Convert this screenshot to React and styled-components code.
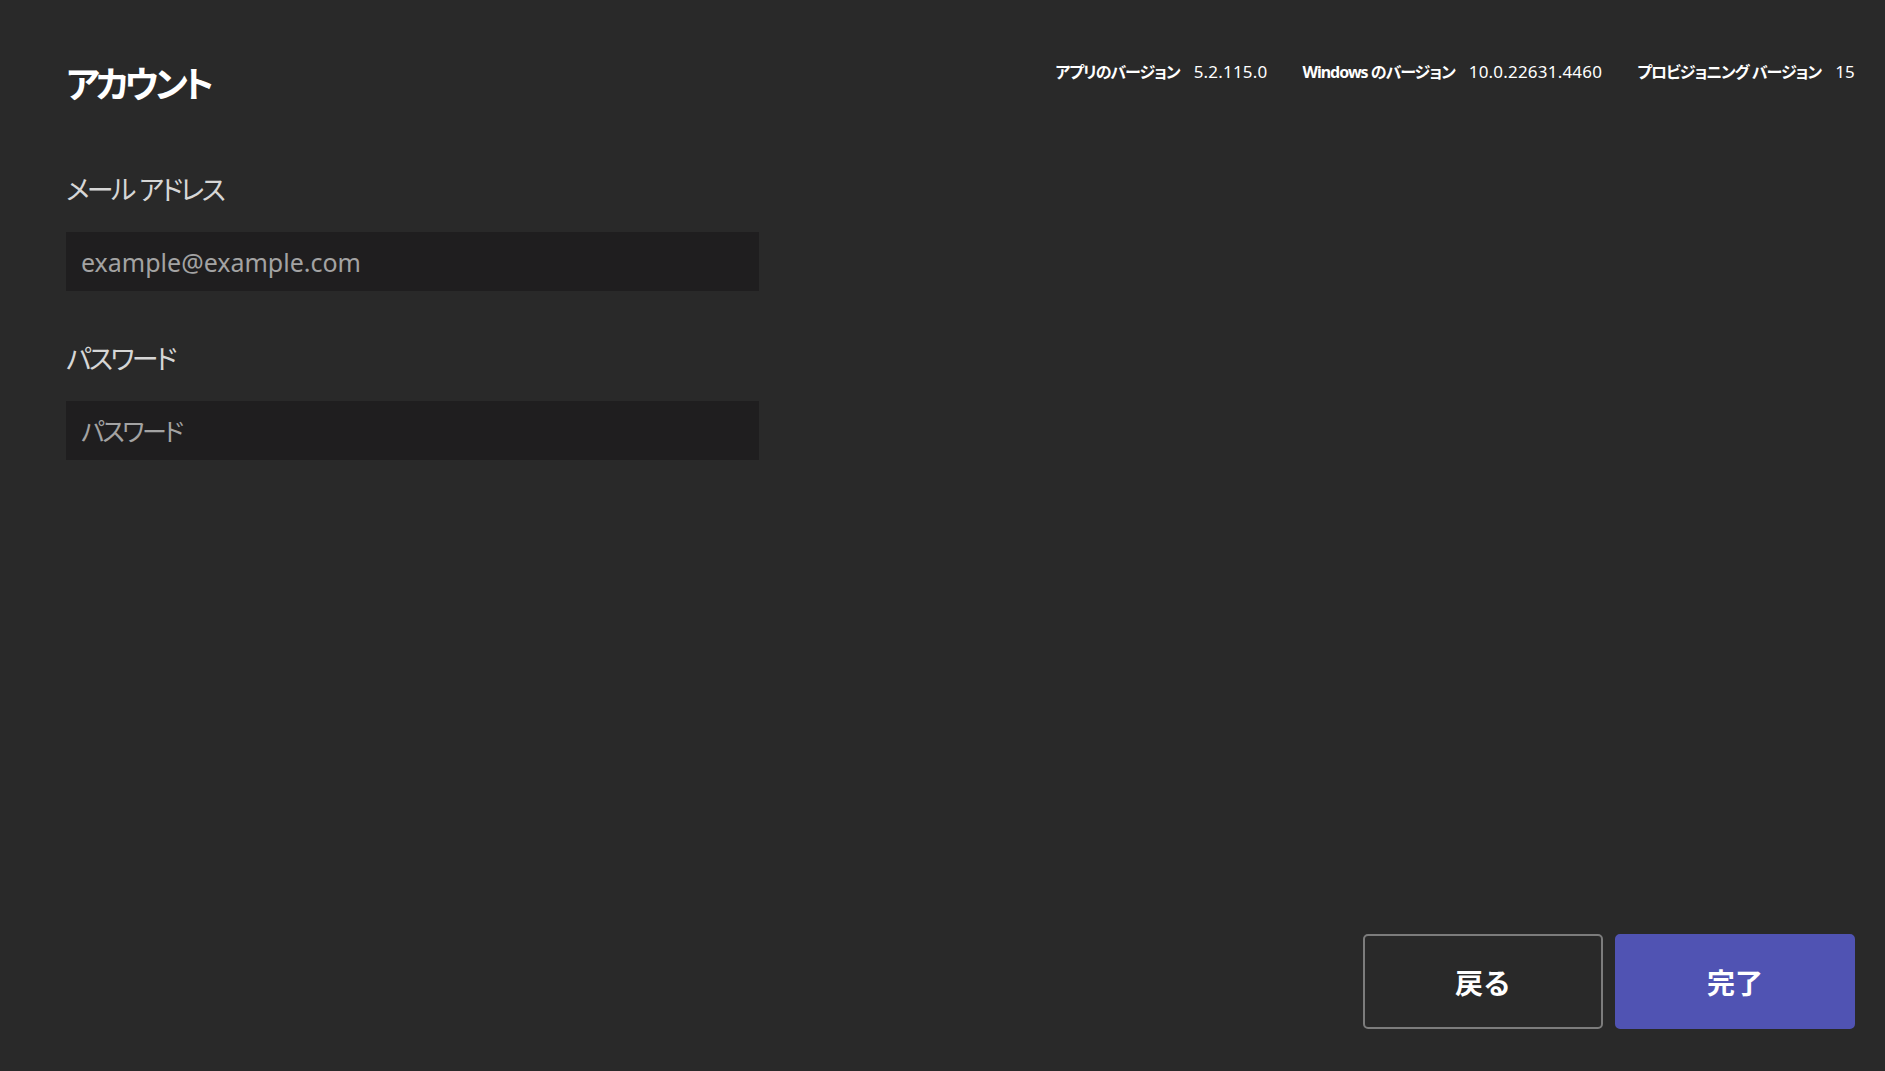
import styled, { createGlobalStyle } from "styled-components";

const GlobalStyle = createGlobalStyle`
	html, body {
		margin: 0;
		padding: 0;
		background: #292929;
	}
	body {
		font-family: "Noto Sans", "Noto Sans CJK JP", sans-serif;
		font-feature-settings: "palt";
	}
	* {
		box-sizing: border-box;
	}
`;

const Page = styled.div`
	display: flex;
	flex-direction: column;
	height: 100vh;
	padding: 60px 30px 42px 66px;
	background: #292929;
	color: #ffffff;
`;

const Header = styled.div`
	display: flex;
	justify-content: space-between;
	align-items: flex-start;
`;

const Title = styled.h1`
	margin: 0;
	font-size: 36px;
	font-weight: 700;
	line-height: 1.4;
	letter-spacing: -4px;
`;

const VersionList = styled.div`
	display: flex;
	gap: 35px;
	font-size: 16px;
	line-height: 24px;
`;

const VersionItem = styled.div`
	display: flex;
	align-items: baseline;
	gap: 14px;
`;

const VersionLabel = styled.span`
	font-weight: 700;
	letter-spacing: -1px;
`;

const VersionValue = styled.span`
	font-size: 17px;
	font-weight: 400;
	letter-spacing: 0.2px;
`;

const Form = styled.div`
	display: flex;
	flex-direction: column;
	width: 693px;
	margin-top: 62px;
`;

const Label = styled.label`
	font-size: 27px;
	line-height: 36px;
	color: #d6d6d6;
	letter-spacing: -2.6px;
	word-spacing: 1px;
	margin-bottom: ${(p) => p.$gap}px;
`;

const Input = styled.input`
	width: 100%;
	height: 59px;
	border: none;
	outline: none;
	background: #1f1e1f;
	padding: 0 15px;
	font-family: "Noto Sans", "Noto Sans CJK JP", sans-serif;
	font-feature-settings: "palt";
	font-size: 25px;
	color: #ffffff;
	margin-bottom: ${(p) => p.$gap}px;

	&::placeholder {
		color: #a3a3a3;
	}

	&[type="password"]::placeholder {
		letter-spacing: -2.4px;
	}
`;

const Footer = styled.div`
	display: flex;
	justify-content: flex-end;
	gap: 12px;
	margin-top: auto;
`;

const Button = styled.button`
	width: 240px;
	height: 95px;
	border-radius: 5px;
	border: 2px solid ${(p) => (p.$primary ? "#5053b3" : "#7c7c7c")};
	background: ${(p) => (p.$primary ? "#5053b3" : "#292929")};
	color: #ffffff;
	font-family: "Noto Sans CJK JP", sans-serif;
	font-size: 28px;
	font-weight: 700;
	cursor: pointer;
`;

const versions = [
	{ label: "アプリのバージョン", value: "5.2.115.0" },
	{ label: "Windows のバージョン", value: "10.0.22631.4460" },
	{ label: "プロビジョニング バージョン", value: "15" },
];

const App = () => {
	return (
		<>
			<GlobalStyle />
			<Page>
				<Header>
					<Title>アカウント</Title>
					<VersionList>
						{versions.map((v) => (
							<VersionItem key={v.label}>
								<VersionLabel>{v.label}</VersionLabel>
								<VersionValue>{v.value}</VersionValue>
							</VersionItem>
						))}
					</VersionList>
				</Header>
				<Form>
					<Label $gap={24}>メール アドレス</Label>
					<Input $gap={50} placeholder="example@example.com" />
					<Label $gap={24}>パスワード</Label>
					<Input $gap={0} type="password" placeholder="パスワード" />
				</Form>
				<Footer>
					<Button>戻る</Button>
					<Button $primary>完了</Button>
				</Footer>
			</Page>
		</>
	);
};

export default App;
